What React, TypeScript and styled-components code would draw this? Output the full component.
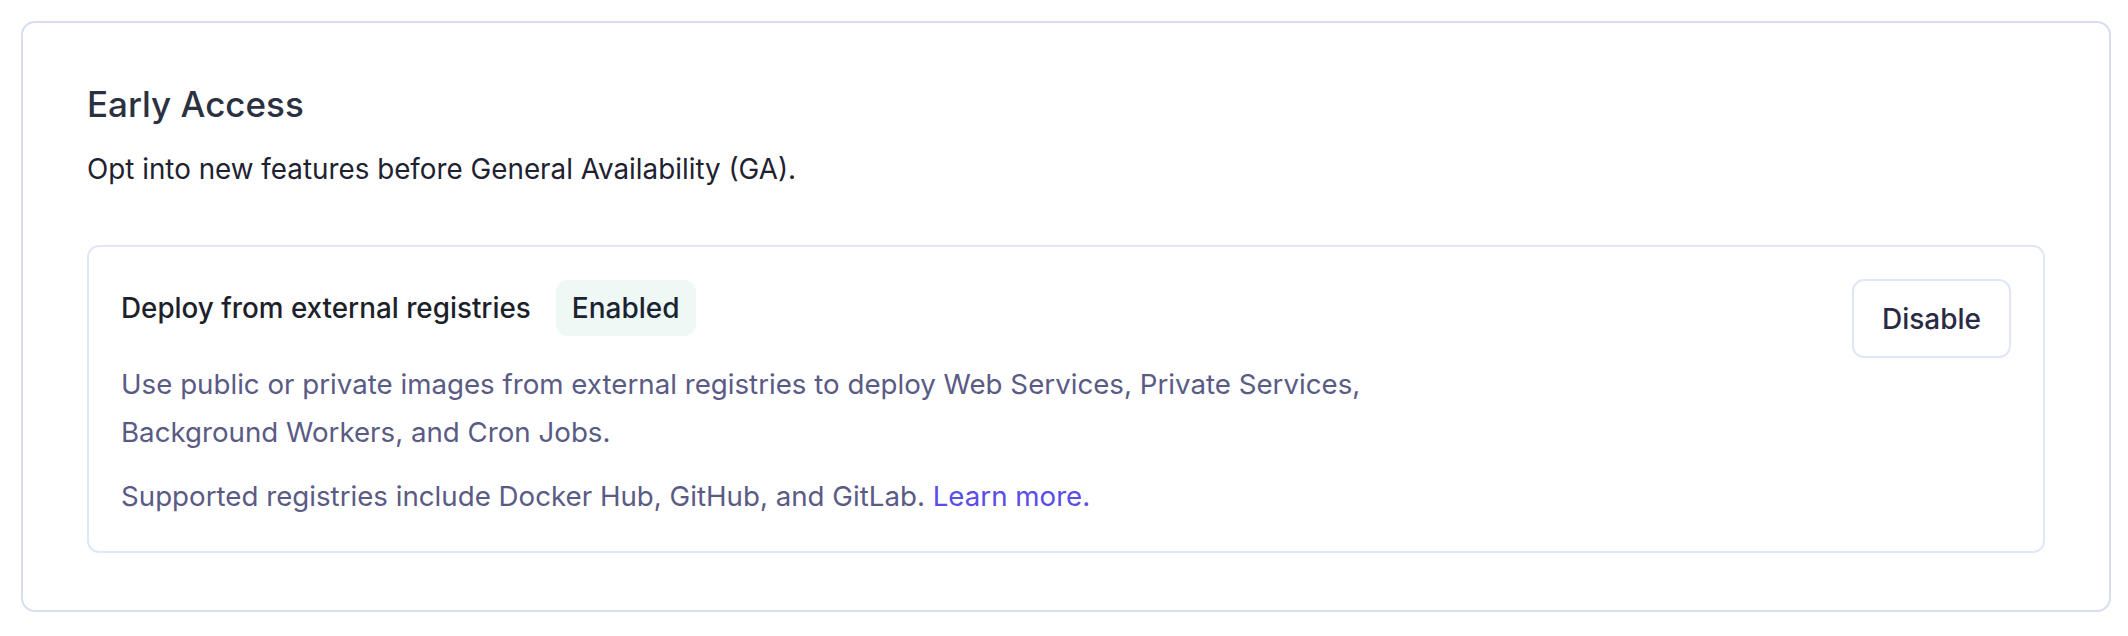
import React from "react";
import styled, { createGlobalStyle } from "styled-components";

const GlobalStyle = createGlobalStyle`
  * { box-sizing: border-box; }
  html, body { margin: 0; padding: 0; background: #ffffff; }
  body {
    font-family: Inter, "Noto Sans", "Liberation Sans", sans-serif;
    -webkit-font-smoothing: antialiased;
  }
`;

const Page = styled.div`
  padding: 21px 17px 25px 21px;
`;

const Section = styled.section`
  border: 2px solid #d6deef;
  border-radius: 14px;
  padding: 57px 64px 57px 64px;
  display: flex;
  flex-direction: column;
`;

const Heading = styled.h2`
  margin: 0;
  font-size: 35px;
  line-height: 48px;
  font-weight: 500;
  color: #2c3142;
`;

const Subtitle = styled.p`
  margin: 23px 0 0 0;
  font-size: 27.8px;
  line-height: 36px;
  font-weight: 400;
  color: #1e2230;
`;

const FeatureCard = styled.div`
  margin-top: 58px;
  border: 2px solid #e0e7f5;
  border-radius: 12px;
  padding: 33px 32px 30px 32px;
  display: flex;
  align-items: flex-start;
  gap: 32px;
`;

const FeatureBody = styled.div`
  flex: 1;
  display: flex;
  flex-direction: column;
`;

const TitleRow = styled.div`
  display: flex;
  align-items: center;
  gap: 25px;
`;

const FeatureTitle = styled.h3`
  margin: 0;
  font-size: 27.8px;
  line-height: 36px;
  font-weight: 500;
  color: #1d1f2b;
`;

const Badge = styled.span`
  display: inline-flex;
  align-items: center;
  height: 56px;
  padding: 0 16px;
  border-radius: 12px;
  background: #eef9f5;
  color: #1c2330;
  font-size: 28px;
  font-weight: 500;
`;

const Description = styled.p<{ $gap?: number }>`
  margin: ${(p) => p.$gap ?? 0}px 0 0 0;
  max-width: 1300px;
  font-size: 27.7px;
  line-height: 47.5px;
  font-weight: 400;
  color: #5a5b85;
`;

const Link = styled.a`
  color: #5a4de6;
  text-decoration: none;
`;

const Button = styled.button`
  flex: none;
  margin-top: -1px;
  height: 79px;
  padding: 0 28px;
  border: 2px solid #dfe6f5;
  border-radius: 12px;
  background: #ffffff;
  color: #292a44;
  font-family: inherit;
  font-size: 28px;
  font-weight: 500;
  cursor: pointer;
`;

export default function App() {
  return (
    <>
      <GlobalStyle />
      <Page>
        <Section>
          <Heading>Early Access</Heading>
          <Subtitle>Opt into new features before General Availability (GA).</Subtitle>
          <FeatureCard>
            <FeatureBody>
              <TitleRow>
                <FeatureTitle>Deploy from external registries</FeatureTitle>
                <Badge>Enabled</Badge>
              </TitleRow>
              <Description $gap={25}>
                Use public or private images from external registries to deploy Web Services, Private Services,
                Background Workers, and Cron Jobs.
              </Description>
              <Description $gap={17}>
                Supported registries include Docker Hub, GitHub, and GitLab.{" "}
                <Link href="#">Learn more.</Link>
              </Description>
            </FeatureBody>
            <Button>Disable</Button>
          </FeatureCard>
        </Section>
      </Page>
    </>
  );
}
